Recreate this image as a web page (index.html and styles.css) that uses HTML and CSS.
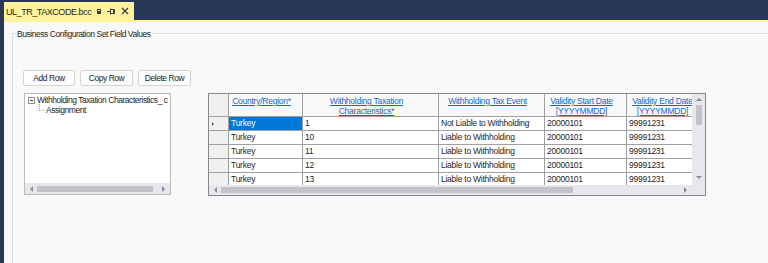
FILE: index.html
```html
<!DOCTYPE html>
<html>
<head>
<meta charset="utf-8">
<link rel="stylesheet" href="styles.css">
</head>
<body>
<div class="window">
  <div class="tabstrip">
    <div class="tab">
      <span class="tab-title">UL_TR_TAXCODE.bcc</span>
      <span class="tab-icons">
        <svg class="ic-keep" width="6" height="7" viewBox="0 0 6 7"><rect x="1" y="1" width="4" height="5" fill="#3c3c3c"/><rect x="2" y="2" width="2" height="1" fill="#fff29d"/></svg>
        <svg class="ic-pin" width="9" height="7" viewBox="0 0 9 7"><path d="M0 3.5h3.5M3.5 0.5v6M3.5 1.5h4v4h-4M6.5 1.5v4" stroke="#3c3c3c" stroke-width="1" fill="none"/></svg>
        <svg class="ic-close" width="8" height="8" viewBox="0 0 8 8"><path d="M1 1l6 6M7 1l-6 6" stroke="#3c3c3c" stroke-width="1.3"/></svg>
      </span>
    </div>
  </div>
  <div class="doc">
    <div class="group">
      <span class="group-title">Business Configuration Set Field Values</span>
      <div class="toolbar">
        <button class="btn">Add Row</button>
        <button class="btn">Copy Row</button>
        <button class="btn">Delete Row</button>
      </div>
      <div class="main">
        <div class="tree">
          <div class="tree-body">
            <div class="node root"><span class="expander"><svg width="7" height="7" viewBox="0 0 7 7"><rect x="0.5" y="0.5" width="6" height="6" fill="#fff" stroke="#8e8f8f"/><path d="M2 3.5h3" stroke="#333"/></svg></span><span class="node-text">Withholding Taxation Characteristics_ c</span></div>
            <div class="node child"><span class="connector"></span><span class="node-text">Assignment</span></div>
          </div>
          <div class="hscroll small">
            <span class="arrow left"></span>
            <span class="track"><span class="thumb thumb-tree"></span></span>
            <span class="arrow right"></span>
          </div>
        </div>
        <div class="grid">
          <div class="grid-view">
            <table class="table">
              <colgroup>
                <col class="c-rh"><col class="c-1"><col class="c-2"><col class="c-3"><col class="c-4"><col class="c-5">
              </colgroup>
              <thead>
                <tr>
                  <th class="rh"></th>
                  <th><a>Country/Region*</a></th>
                  <th><a>Withholding Taxation<br>Characteristics*</a></th>
                  <th><a>Withholding Tax Event</a></th>
                  <th><a>Validity Start Date<br>[YYYYMMDD]</a></th>
                  <th><a>Validity End Date<br>[YYYYMMDD]</a></th>
                </tr>
              </thead>
              <tbody>
                <tr><td class="rh"><span class="cur"></span></td><td class="sel">Turkey</td><td>1</td><td>Not Liable to Withholding</td><td>20000101</td><td>99991231</td></tr>
                <tr><td class="rh"></td><td>Turkey</td><td>10</td><td>Liable to Withholding</td><td>20000101</td><td>99991231</td></tr>
                <tr><td class="rh"></td><td>Turkey</td><td>11</td><td>Liable to Withholding</td><td>20000101</td><td>99991231</td></tr>
                <tr><td class="rh"></td><td>Turkey</td><td>12</td><td>Liable to Withholding</td><td>20000101</td><td>99991231</td></tr>
                <tr><td class="rh"></td><td>Turkey</td><td>13</td><td>Liable to Withholding</td><td>20000101</td><td>99991231</td></tr>
              </tbody>
            </table>
          </div>
          <div class="vscroll">
            <span class="arrow up"></span>
            <span class="vtrack"><span class="vthumb"></span></span>
            <span class="arrow down"></span>
          </div>
          <div class="hscroll">
            <span class="arrow left"></span>
            <span class="track"><span class="thumb thumb-grid"></span></span>
            <span class="arrow right"></span>
          </div>
          <div class="corner"></div>
        </div>
      </div>
    </div>
  </div>
</div>
</body>
</html>
```

FILE: styles.css
```css
* { box-sizing: border-box; }
html, body { margin: 0; padding: 0; }
body {
  font-family: "Liberation Sans", Arial, sans-serif;
  font-size: 8.5px;
  letter-spacing: -0.45px;
  color: #1e1e1e;
  background: #293955;
}
.window {
  width: 768px;
  height: 263px;
  display: flex;
  flex-direction: column;
  overflow: hidden;
}
.tabstrip {
  height: 20px;
  padding-left: 4px;
  display: flex;
  align-items: flex-end;
}
.tab {
  height: 18px;
  background: #fff29d;
  display: flex;
  align-items: center;
  padding: 0 5px 0 2px;
}
.tab-title {
  flex: none;
  font-size: 9px;
  letter-spacing: -0.45px;
  color: #1e1e1e;
  padding-top: 1px;
  white-space: nowrap;
}
.tab-icons {
  display: flex;
  align-items: center;
  margin-left: 5px;
}
.tab-icons svg { display: block; flex: none; }
.ic-keep { margin-right: 5px; }
.ic-pin { margin-right: 5px; }
.doc {
  flex: 1;
  margin-left: 4px;
  border-top: 2px solid #fff29d;
  background: #f9f9f9;
  padding: 11px 0 0 8px;
  display: flex;
  flex-direction: column;
}
.group {
  flex: 1;
  position: relative;
  border-top: 1px solid #dedede;
  border-left: 1px solid #dedede;
  padding: 35px 0 0 10px;
}
.group-title {
  position: absolute;
  top: -6px;
  left: 3px;
  height: 12px;
  line-height: 12px;
  padding: 0 1px;
  background: #f9f9f9;
  color: #1e1e1e;
}
.toolbar {
  display: flex;
  gap: 5px;
  height: 16px;
  margin-top: 1px;
}
.btn {
  font: inherit;
  letter-spacing: -0.45px;
  color: #1e1e1e;
  width: 53px;
  height: 16px;
  padding: 0;
  background: #fdfdfd;
  border: 1px solid #d4d4d4;
  border-radius: 2px;
}
.btn:first-child { width: 52px; }
.main {
  display: flex;
  gap: 37px;
  margin-top: 7px;
  padding-left: 1px;
}
.tree {
  width: 147px;
  height: 102px;
  border: 1px solid #b9b9b9;
  background: #fff;
  display: flex;
  flex-direction: column;
}
.tree-body {
  flex: 1;
  padding: 1px 0 0 3px;
  overflow: hidden;
}
.node {
  display: flex;
  align-items: center;
  height: 10px;
  white-space: nowrap;
}
.expander { width: 8px; height: 7px; margin-right: 1px; }
.expander svg { display: block; }
.child { padding-left: 11px; margin-top: 0; }
.connector {
  width: 5px;
  height: 7px;
  margin-top: -6px;
  margin-right: 2px;
  border-left: 1px dotted #a0a0a0;
  border-bottom: 1px dotted #a0a0a0;
}
.hscroll {
  height: 10px;
  background: #e8e8ec;
  display: flex;
  align-items: center;
}
.hscroll.small { height: 11px; }
.arrow {
  width: 0;
  height: 0;
  flex: none;
}
.arrow.left {
  border-top: 3px solid transparent;
  border-bottom: 3px solid transparent;
  border-right: 3px solid #868999;
  margin: 0 4px 0 5px;
}
.arrow.right {
  border-top: 3px solid transparent;
  border-bottom: 3px solid transparent;
  border-left: 3px solid #868999;
  margin: 0 5px 0 4px;
}
.track {
  flex: 1;
  height: 6px;
  display: flex;
}
.thumb {
  height: 6px;
  background: #c2c3c9;
}
.thumb-tree { width: 116px; }
.thumb-grid { width: 352px; }
.grid {
  width: 498px;
  height: 103px;
  border: 1px solid #828790;
  background: #fff;
  display: grid;
  grid-template-columns: 483px 13px;
  grid-template-rows: 91px 10px;
}
.grid-view {
  overflow: hidden;
  background: #f0f0f0;
  letter-spacing: -0.25px;
}
.table {
  table-layout: fixed;
  border-collapse: separate;
  border-spacing: 0;
  width: 498px;
}
.c-rh { width: 20px; }
.c-1 { width: 74px; }
.c-2 { width: 136px; }
.c-3 { width: 106px; }
.c-4 { width: 82px; }
.c-5 { width: 80px; }
.table th, .table td {
  border-right: 1px solid #a0a0a0;
  border-bottom: 1px solid #a0a0a0;
  white-space: nowrap;
  overflow: hidden;
}
.table th {
  height: 22px;
  background: #f9f9f9;
  font-weight: normal;
  vertical-align: top;
  text-align: center;
  padding: 2px 8px 0 0;
  line-height: 10px;
}
.table th a {
  color: #1566c8;
  text-decoration: underline;
}
.table td {
  height: 14px;
  background: #fff;
  padding: 0 0 0 2px;
  line-height: 13px;
}
.table .rh {
  background: #f0f0f0;
  padding: 0;
}
.table td.sel {
  background: #0078d7;
  color: #fff;
}
.cur {
  display: block;
  width: 0;
  height: 0;
  margin-left: 3px;
  border-top: 2px solid transparent;
  border-bottom: 2px solid transparent;
  border-left: 2px solid #555;
}
.vscroll {
  grid-row: 1;
  grid-column: 2;
  background: #e8e8ec;
  display: flex;
  flex-direction: column;
  align-items: center;
}
.arrow.up {
  border-left: 3px solid transparent;
  border-right: 3px solid transparent;
  border-bottom: 3px solid #868999;
  margin: 4px 0 4px;
}
.arrow.down {
  border-left: 3px solid transparent;
  border-right: 3px solid transparent;
  border-top: 3px solid #868999;
  margin: 4px 0 6px;
}
.vtrack {
  flex: 1;
  width: 6px;
}
.vthumb {
  display: block;
  width: 6px;
  height: 20px;
  background: #c2c3c9;
}
.grid .hscroll {
  grid-row: 2;
  grid-column: 1;
}
.corner {
  grid-row: 2;
  grid-column: 2;
  background: #e8e8ec;
}
```
